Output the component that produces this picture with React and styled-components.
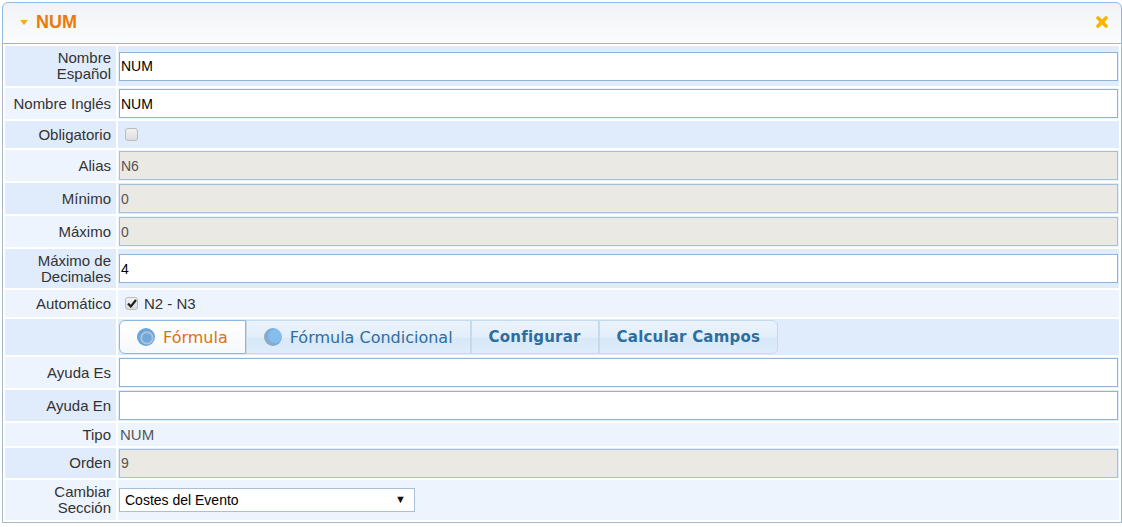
import React from "react"
import styled, { createGlobalStyle } from "styled-components"

const GlobalStyle = createGlobalStyle`
  body {
    margin: 0;
    background: #ffffff;
    font-family: "Liberation Sans", Arial, sans-serif;
  }
`

const Page = styled.div`
  padding: 2px 0 0 2px;
`

const Panel = styled.div`
  width: 1120px;
`

const Header = styled.div`
  box-sizing: border-box;
  height: 42px;
  display: flex;
  align-items: center;
  padding: 0 13px 2px 17px;
  border: 1px solid #8dbbe4;
  border-radius: 6px 6px 0 0;
  background: linear-gradient(#f0f3f6, #fbfcfd);
`

const Caret = styled.span`
  width: 0;
  height: 0;
  border-left: 4px solid transparent;
  border-right: 4px solid transparent;
  border-top: 5px solid #f3a73a;
  margin-right: 8px;
`

const Title = styled.h1`
  flex: 1;
  margin: 0;
  font-size: 18px;
  font-weight: bold;
  color: #ea7a0c;
`

const Close = styled.button`
  border: none;
  background: none;
  padding: 0;
  width: 12px;
  height: 12px;
  display: flex;
  cursor: pointer;
`

const Body = styled.div`
  border: 1px solid #a9b8c7;
  border-top: none;
`

const Table = styled.table`
  width: 100%;
  border-spacing: 2px;
  border-collapse: separate;
`

const Cell = styled.td`
  height: ${p => p.$h}px;
  padding: 0;
  vertical-align: middle;
  background: ${p => (p.$odd ? "#e0ecfc" : "#eef4fe")};
`

const Label = styled(Cell)`
  width: 106px;
  padding-right: 5px;
  text-align: right;
  font-size: 15px;
  line-height: 16px;
  color: #333;
`

const TextInput = styled.input`
  box-sizing: border-box;
  display: block;
  width: calc(100% - 2px);
  height: 29px;
  margin: 0 0 0 1px;
  padding: 0 1px;
  border: 1px solid ${p => (p.disabled ? "#a5c0dc" : "#90b3d9")};
  background: ${p => (p.disabled ? "#ebe9e3" : "#ffffff")};
  font-family: "Liberation Sans", Arial, sans-serif;
  font-size: 14px;
  color: ${p => (p.disabled ? "#555" : "#000")};
  outline: none;
`

const CheckRow = styled.div`
  display: flex;
  align-items: center;
  gap: 6px;
  margin-left: 7px;
  font-size: 15px;
  color: #333;
`

const Box = styled.span`
  box-sizing: border-box;
  width: 13px;
  height: 13px;
  border: 1px solid #bcbcbc;
  border-radius: 3px;
  background: linear-gradient(#f2f2f2, #dddddd);
  display: flex;
  align-items: center;
  justify-content: center;
`

const PlainValue = styled.span`
  padding-left: 2px;
  font-size: 15px;
  color: #555;
`

const Tabs = styled.div`
  display: flex;
  margin-left: 1px;
`

const Tab = styled.button`
  box-sizing: border-box;
  height: 34px;
  display: flex;
  align-items: center;
  gap: 8px;
  padding: 0 17px;
  border: 1px solid ${p => (p.$active ? "#86b9e4" : "#c5dbec")};
  background: ${p =>
    p.$active
      ? "linear-gradient(#ffffff, #f6f9fc)"
      : "linear-gradient(#eaf3fc 0%, #e3effb 50%, #d8e8f8 55%, #dfedfa 100%)"};
  font-family: "DejaVu Sans", Verdana, sans-serif;
  font-size: ${p => (p.$bold ? "15px" : "16px")};
  font-weight: ${p => (p.$bold ? "bold" : "normal")};
  letter-spacing: ${p => (p.$bold ? "0.2px" : "0")};
  color: ${p => (p.$active ? "#e1700b" : "#2e6e9e")};
  cursor: pointer;

  &:first-child {
    border-radius: 6px 0 0 6px;
  }
  &:last-child {
    border-radius: 0 6px 6px 0;
  }
`

const Radio = styled.span`
  width: 18px;
  height: 18px;
  border-radius: 50%;
  background: ${p =>
    p.$on
      ? "radial-gradient(circle at 55% 55%, #6fa8de 0 4px, #9fb9cf 5px, #b9c9d6 6px, #6aa6dd 7px)"
      : "radial-gradient(circle at 62% 45%, #86bdea 0 6px, #74ade2 8px, #8ea9c2 9px)"};
`

const SelectWrap = styled.div`
  position: relative;
  width: 296px;
  margin-left: 1px;
`

const Select = styled.select`
  box-sizing: border-box;
  width: 100%;
  height: 24px;
  padding: 0 0 0 5px;
  appearance: none;
  border: 1px solid #a9bfd6;
  background: #fff;
  font-family: "Liberation Sans", Arial, sans-serif;
  font-size: 14px;
  color: #000;
  outline: none;
`

const Arrow = styled.span`
  position: absolute;
  right: 9px;
  top: 5px;
  font-size: 11px;
  color: #111;
  pointer-events: none;
`

const rows = [
  { label: <>Nombre<br />Español</>, h: 40, input: { value: "NUM" } },
  { label: "Nombre Inglés", h: 31, input: { value: "NUM" } },
  { label: "Obligatorio", h: 27, check: { checked: false } },
  { label: "Alias", h: 31, input: { value: "N6", disabled: true } },
  { label: "Mínimo", h: 31, input: { value: "0", disabled: true } },
  { label: "Máximo", h: 31, input: { value: "0", disabled: true } },
  { label: <>Máximo de<br />Decimales</>, h: 39, input: { value: "4" } },
  { label: "Automático", h: 27, check: { checked: true, text: "N2 - N3" } },
  { label: "", h: 36, tabs: true },
  { label: "Ayuda Es", h: 31, input: { value: "" } },
  { label: "Ayuda En", h: 31, input: { value: "" } },
  { label: "Tipo", h: 23, plain: "NUM" },
  { label: "Orden", h: 30, input: { value: "9", disabled: true } },
  { label: <>Cambiar<br />Sección</>, h: 40, select: "Costes del Evento" },
]

const tabs = [
  { text: "Fórmula", radio: true, active: true },
  { text: "Fórmula Condicional", radio: true },
  { text: "Configurar", bold: true },
  { text: "Calcular Campos", bold: true },
]

function Value({ row }) {
  if (row.input) {
    return <TextInput defaultValue={row.input.value} disabled={row.input.disabled} />
  }
  if (row.check) {
    return (
      <CheckRow>
        <Box>
          {row.check.checked && (
            <svg width="10" height="9" viewBox="0 0 10 9">
              <path d="M1 4.5 L3.8 7.5 L9 1" fill="none" stroke="#222" strokeWidth="2.2" />
            </svg>
          )}
        </Box>
        {row.check.text}
      </CheckRow>
    )
  }
  if (row.tabs) {
    return (
      <Tabs>
        {tabs.map(t => (
          <Tab key={t.text} $active={t.active} $bold={t.bold}>
            {t.radio && <Radio $on={t.active} />}
            {t.text}
          </Tab>
        ))}
      </Tabs>
    )
  }
  if (row.plain) {
    return <PlainValue>{row.plain}</PlainValue>
  }
  if (row.select) {
    return (
      <SelectWrap>
        <Select defaultValue={row.select}>
          <option>{row.select}</option>
        </Select>
        <Arrow>▼</Arrow>
      </SelectWrap>
    )
  }
  return null
}

export default function App() {
  return (
    <Page>
      <GlobalStyle />
      <Panel>
        <Header>
          <Caret />
          <Title>NUM</Title>
          <Close aria-label="cerrar">
            <svg width="12" height="12" viewBox="0 0 12 12">
              <path d="M2 2 L10 10 M10 2 L2 10" stroke="#f7b500" strokeWidth="3.6" strokeLinecap="round" />
            </svg>
          </Close>
        </Header>
        <Body>
          <Table>
            <tbody>
              {rows.map((row, i) => (
                <tr key={i}>
                  <Label $h={row.h} $odd={i % 2 === 0}>{row.label}</Label>
                  <Cell $h={row.h} $odd={i % 2 === 0}>
                    <Value row={row} />
                  </Cell>
                </tr>
              ))}
            </tbody>
          </Table>
        </Body>
      </Panel>
    </Page>
  )
}
